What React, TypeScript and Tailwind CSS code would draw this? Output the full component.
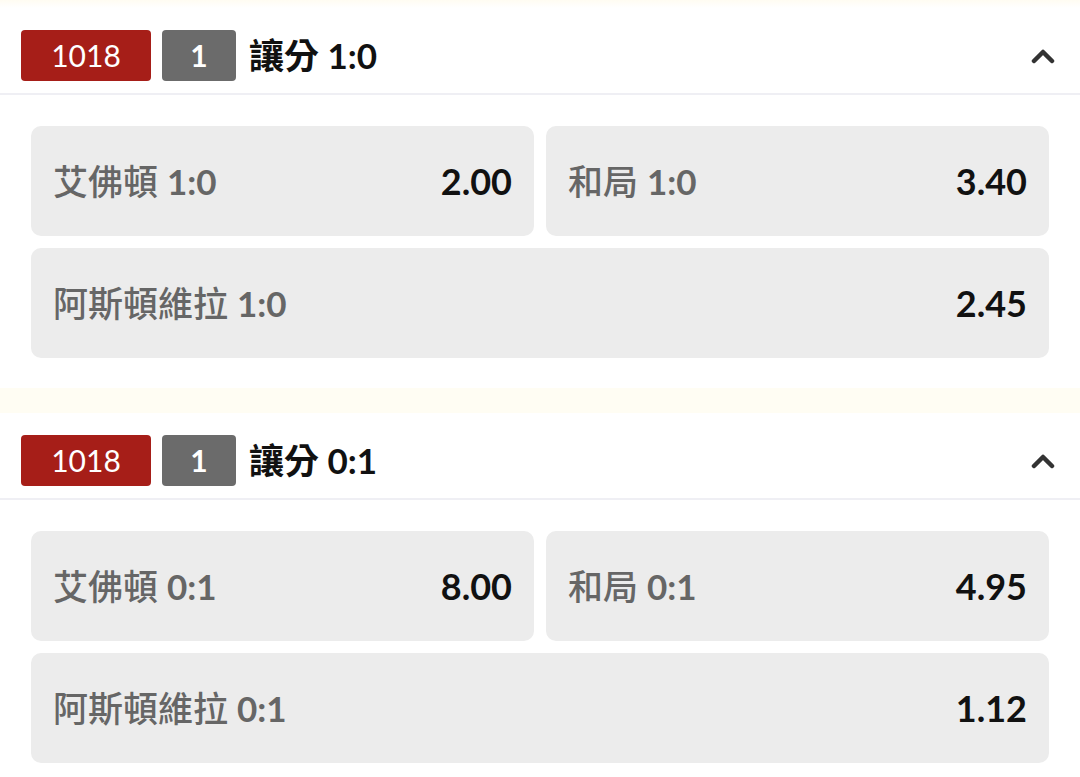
type Odd = { label: string; value: string };

type Market = {
  code: string;
  num: string;
  title: string;
  home: Odd;
  draw: Odd;
  away: Odd;
};

const markets: Market[] = [
  {
    code: '1018',
    num: '1',
    title: '讓分 1:0',
    home: { label: '艾佛頓 1:0', value: '2.00' },
    draw: { label: '和局 1:0', value: '3.40' },
    away: { label: '阿斯頓維拉 1:0', value: '2.45' },
  },
  {
    code: '1018',
    num: '1',
    title: '讓分 0:1',
    home: { label: '艾佛頓 0:1', value: '8.00' },
    draw: { label: '和局 0:1', value: '4.95' },
    away: { label: '阿斯頓維拉 0:1', value: '1.12' },
  },
];

function Chevron() {
  return (
    <svg width="24" height="17" viewBox="0 0 24 17" className="ml-auto text-[#333333]" aria-hidden="true">
      <polyline
        points="3,14 12,5 21,14"
        fill="none"
        stroke="currentColor"
        strokeWidth="4.5"
        strokeLinecap="round"
        strokeLinejoin="round"
      />
    </svg>
  );
}

function OddCell({ odd }: { odd: Odd }) {
  // team name and handicap score are weighted differently
  const [name, score] = odd.label.split(' ');
  return (
    <div className="flex h-[110px] items-center justify-between rounded-[10px] bg-[#ececec] px-[22px]">
      <span className="text-[35px] text-[#666666]">
        <span className="font-medium">{name}</span> <span className="font-bold">{score}</span>
      </span>
      <span className="text-[36px] font-bold text-[#111111]">{odd.value}</span>
    </div>
  );
}

function MarketBlock({ market }: { market: Market }) {
  return (
    <section className="bg-white">
      <div className="flex h-[87px] items-center border-b-2 border-[#efeff4] pt-[10px] pl-[21px] pr-[25px]">
        <span className="flex h-[51px] w-[130px] items-center justify-center rounded-[4px] bg-[#a61e18] text-[30px] text-white">
          {market.code}
        </span>
        <span className="ml-[11px] flex h-[51px] w-[74px] items-center justify-center rounded-[4px] bg-[#6b6b6b] text-[30px] font-bold text-white">
          {market.num}
        </span>
        <span className="ml-[13px] text-[35px] font-bold text-[#111111]">{market.title}</span>
        <Chevron />
      </div>
      <div className="flex flex-col gap-[12px] px-[31px] pt-[31px]">
        <div className="grid grid-cols-2 gap-[12px]">
          <OddCell odd={market.home} />
          <OddCell odd={market.draw} />
        </div>
        <OddCell odd={market.away} />
      </div>
    </section>
  );
}

export default function App() {
  return (
    <div
      className="h-[777px] w-[1080px] overflow-hidden bg-white"
      style={{ fontFamily: 'Lato, "Noto Sans CJK TC", sans-serif' }}
    >
      <div className="h-[8px] bg-gradient-to-b from-[#fffcf2] to-white" />
      <MarketBlock market={markets[0]} />
      <div className="h-[30px] bg-white" />
      <div className="h-[25px] bg-[#fffdf3]" />
      <MarketBlock market={markets[1]} />
    </div>
  );
}
